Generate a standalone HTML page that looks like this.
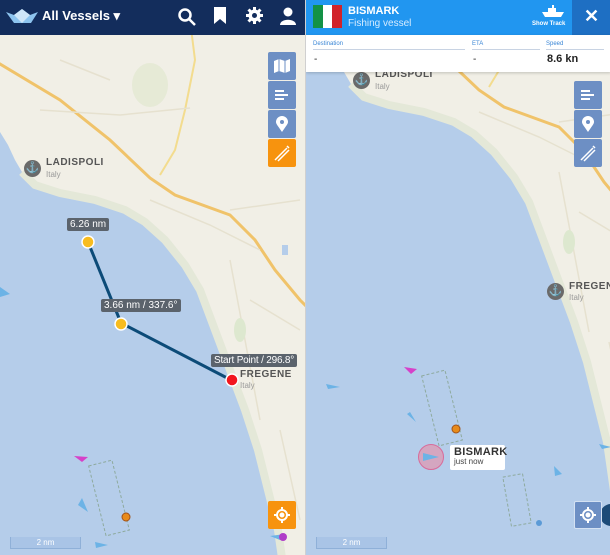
<!DOCTYPE html>
<html><head><meta charset="utf-8"><style>
*{margin:0;padding:0;box-sizing:border-box}
html,body{width:610px;height:555px;overflow:hidden}
body{font-family:"Liberation Sans",sans-serif;background:#f1efe6;position:relative}
.panel{position:absolute;top:0;height:555px;width:305px;overflow:hidden}
.btn{position:absolute;width:28px;height:28px;background:#6d8fc4;border-radius:2px;display:flex;align-items:center;justify-content:center}
.lbl{position:absolute;background:#5b636c;color:#fff;font-size:10px;padding:1px 3px;border-radius:2px;white-space:nowrap}
.tag{position:absolute;font-size:10px;color:#555;font-weight:bold;letter-spacing:.5px}
.sub{position:absolute;font-size:8px;color:#999}
.anch{position:absolute;width:17px;height:17px;border-radius:50%;background:#6a6a6a;color:#fff;font-size:11px;text-align:center;line-height:17px}
.scale{position:absolute;left:10px;top:537px;width:71px;height:12px;border:1px solid #8fb0d8;border-top:none;background:#a9c4e6;color:#fff;font-size:8px;text-align:center;line-height:12px}
</style></head><body>
<svg width="0" height="0" style="position:absolute;left:0;top:0"><defs>
<g id="map">
<rect x="-50" y="-120" width="420" height="820" fill="#f1efe6"/>
<path d="M-50,120 L0,132 L8,145 L15,160 L22,172 L35,185 L60,193 L95,200 L125,210 L145,222 L165,240 L185,265 L200,290 L215,330 L230,370 L245,410 L258,450 L268,490 L278,530 L288,600 L300,700 L-50,700 Z" fill="#b5cdea"/>
<path d="M22,172 L35,185 L60,193 L95,200 L125,210 L145,222 L165,240 L185,265 L200,290 L215,330 L230,370 L245,410 L258,450 L268,490 L278,530 L288,600 L300,700" fill="none" stroke="#e4e8d8" stroke-width="8"/>
<path d="M-10,58 L60,100 L110,140 L150,178 L175,195 L230,215 L255,240 L275,270 L300,300 L320,320" fill="none" stroke="#f0c36a" stroke-width="3"/>
<path d="M160,175 L175,150 L185,110 L195,60 L190,20" fill="none" stroke="#f3dc8e" stroke-width="2"/>
<path d="M40,110 L120,115 L190,108 M60,60 L110,80 M230,210 L300,200 M150,200 L210,225 L260,250 M250,300 L300,330 M230,260 L260,420 M280,430 L300,520" fill="none" stroke="#e6e1cf" stroke-width="1.5"/>
<ellipse cx="150" cy="85" rx="18" ry="22" fill="#e6ead6"/>
<ellipse cx="240" cy="330" rx="6" ry="12" fill="#dde8cf"/>
<rect x="282" y="245" width="6" height="10" fill="#b5cdea"/>
</g></defs></svg>

<!-- LEFT PANEL -->
<div class="panel" style="left:0">
<svg width="305" height="555" style="position:absolute;left:0;top:0">
<use href="#map"/>
<rect x="97" y="462" width="24" height="72" fill="none" stroke="#8eaa9e" stroke-dasharray="3,2" transform="rotate(-14 109 498)"/>
<line x1="88" y1="242" x2="121" y2="323" stroke="#0c4b78" stroke-width="3"/>
<line x1="121" y1="323" x2="231" y2="380" stroke="#0c4b78" stroke-width="3"/>
<circle cx="88" cy="242" r="6" fill="#f8bc1f" stroke="#fff" stroke-width="1.5"/>
<circle cx="121" cy="324" r="6" fill="#f8bc1f" stroke="#fff" stroke-width="1.5"/>
<circle cx="232" cy="380" r="6" fill="#f2161d" stroke="#fff" stroke-width="1.5"/>
<circle cx="126" cy="517" r="4" fill="#e88b1a" stroke="#a0521a" stroke-width="1"/>
<polygon points="74,456 88,457 82,462" fill="#d641c9"/>
<polygon points="0,287 10,294 0,297" fill="#6cb3e6"/>
<polygon points="78,505 88,512 82,498" fill="#6cb3e6"/>
<polygon points="95,542 108,545 96,548" fill="#6cb3e6"/>
<polygon points="270,536 285,534 280,540" fill="#6cb3e6"/>
<circle cx="283" cy="537" r="4" fill="#b03dc8"/>
</svg>
<div class="anch" style="left:24px;top:160px">⚓</div>
<div class="tag" style="left:46px;top:157px">LADISPOLI</div><div class="sub" style="left:46px;top:170px">Italy</div>
<div class="tag" style="left:240px;top:369px">FREGENE</div><div class="sub" style="left:240px;top:381px">Italy</div>
<div class="lbl" style="left:67px;top:218px">6.26 nm</div>
<div class="lbl" style="left:101px;top:299px">3.66 nm / 337.6°</div>
<div class="lbl" style="left:211px;top:354px;font-size:10px;letter-spacing:-0.2px">Start Point / 296.8°</div>
<div class="btn" style="left:268px;top:52px"><svg width="16" height="14"><path d="M0,2 L5,0 L11,2 L16,0 L16,12 L11,14 L5,12 L0,14Z" fill="#fff"/><path d="M5,0V12M11,2V14" stroke="#6d8fc4"/></svg></div>
<div class="btn" style="left:268px;top:81px"><svg width="16" height="14" fill="none" stroke="#fff" stroke-width="2"><path d="M1,3H10M1,7H14M1,11H10"/></svg></div>
<div class="btn" style="left:268px;top:110px"><svg width="12" height="16"><path d="M6,16 C2,10 0,8 0,6 A6,6 0 0 1 12,6 C12,8 10,10 6,16Z" fill="#fff"/><circle cx="6" cy="6" r="2" fill="#6d8fc4"/></svg></div>
<div class="btn" style="left:268px;top:139px;background:#f7930e"><svg width="18" height="18" fill="none" stroke="#fff" stroke-width="1.5"><path d="M2,16 L14,4 M5,17 L16,6 M14,2 L16,4"/></svg></div>
<div class="btn" style="left:268px;top:501px;background:#f7930e"><svg width="18" height="18" fill="none" stroke="#fff" stroke-width="2"><circle cx="9" cy="9" r="5"/><circle cx="9" cy="9" r="1.5" fill="#fff"/><path d="M9,1V4M9,14V17M1,9H4M14,9H17"/></svg></div>
<div class="scale">2 nm</div>
<div style="position:absolute;left:0;top:0;width:305px;height:35px;background:#132d5c">
<svg style="position:absolute;left:6px;top:9px" width="32" height="16"><path d="M0,3 L8,14 L25,14 L32,3 L24,6 L16,0 L8,6Z" fill="#8dc4ef"/><path d="M8,6 L16,0 L24,6 L16,14Z" fill="#cfe6f8"/></svg>
<div style="position:absolute;left:42px;top:8px;color:#fff;font-weight:bold;font-size:13px">All Vessels ▾</div>
<svg style="position:absolute;left:178px;top:8px" width="18" height="18" fill="none" stroke="#fff" stroke-width="2.5"><circle cx="7" cy="7" r="5.5"/><path d="M11,11L17,17"/></svg>
<svg style="position:absolute;left:214px;top:7px" width="12" height="18"><path d="M0,0H12V17L6,12L0,17Z" fill="#fff"/></svg>
<svg style="position:absolute;left:246px;top:7px" width="17" height="17"><circle cx="8.5" cy="8.5" r="6" fill="#fff"/><path d="M8.5,0V17M0,8.5H17M2.5,2.5L14.5,14.5M14.5,2.5L2.5,14.5" stroke="#fff" stroke-width="3"/><circle cx="8.5" cy="8.5" r="2.5" fill="#132d5c"/></svg>
<svg style="position:absolute;left:280px;top:7px" width="16" height="18"><circle cx="8" cy="5" r="4.5" fill="#fff"/><path d="M0,18 C0,11 16,11 16,18Z" fill="#fff"/></svg>
</div>
</div>

<!-- RIGHT PANEL -->
<div class="panel" style="left:305px;border-left:1px solid #d0d0d0">
<svg width="305" height="555" style="position:absolute;left:0;top:0">
<g transform="translate(23,-88)"><use href="#map"/></g>
<rect x="124" y="372" width="24" height="72" fill="none" stroke="#8eaa9e" stroke-dasharray="3,2" transform="rotate(-14 136 408)"/>
<rect x="201" y="475" width="20" height="50" fill="none" stroke="#8eaa9e" stroke-dasharray="3,2" transform="rotate(-10 211 500)"/>
<circle cx="150" cy="429" r="4" fill="#e88b1a" stroke="#a0521a"/>
<polygon points="98,367 111,369 105,374" fill="#d641c9"/>
<polygon points="20,384 34,387 22,389" fill="#6cb3e6"/>
<polygon points="101,414 110,422 104,412" fill="#6cb3e6"/>
<polygon points="248,466 256,474 249,476" fill="#6cb3e6"/>
<polygon points="293,444 305,447 296,449" fill="#6cb3e6"/>
<circle cx="233" cy="523" r="3" fill="#5b9ad6"/>
<circle cx="125" cy="457" r="12.5" fill="#d4a6c0" stroke="#d86b9a"/>
<polygon points="117,453 133,457 117,461" fill="#6cb3e6"/>
<circle cx="305" cy="515" r="11" fill="#1d4b78"/>
</svg>
<div class="anch" style="left:47px;top:72px">⚓</div>
<div class="tag" style="left:69px;top:69px">LADISPOLI</div><div class="sub" style="left:69px;top:82px">Italy</div>
<div class="anch" style="left:241px;top:283px">⚓</div>
<div class="tag" style="left:263px;top:281px">FREGENE</div><div class="sub" style="left:263px;top:293px">Italy</div>
<div style="position:absolute;left:144px;top:445px;width:55px;height:25px;background:#fff;border-radius:2px;padding:1px 4px">
<div style="font-size:11px;font-weight:bold;color:#333;letter-spacing:.3px">BISMARK</div><div style="font-size:8px;color:#444;margin-top:-1px">just now</div></div>
<div class="btn" style="left:268px;top:81px"><svg width="16" height="14" fill="none" stroke="#fff" stroke-width="2"><path d="M1,3H10M1,7H14M1,11H10"/></svg></div>
<div class="btn" style="left:268px;top:110px"><svg width="12" height="16"><path d="M6,16 C2,10 0,8 0,6 A6,6 0 0 1 12,6 C12,8 10,10 6,16Z" fill="#fff"/><circle cx="6" cy="6" r="2" fill="#6d8fc4"/></svg></div>
<div class="btn" style="left:268px;top:139px"><svg width="18" height="18" fill="none" stroke="#fff" stroke-width="1.5"><path d="M2,16 L14,4 M5,17 L16,6 M14,2 L16,4"/></svg></div>
<div class="btn" style="left:268px;top:501px;border:1px solid #d4e1f2"><svg width="18" height="18" fill="none" stroke="#fff" stroke-width="2"><circle cx="9" cy="9" r="5"/><circle cx="9" cy="9" r="1.5" fill="#fff"/><path d="M9,1V4M9,14V17M1,9H4M14,9H17"/></svg></div>
<div class="scale">2 nm</div>
<div style="position:absolute;left:0;top:0;width:305px;height:35px;background:#2196f0">
<div style="position:absolute;left:7px;top:5px;width:29px;height:23px;display:flex"><div style="flex:1;background:#139246"></div><div style="flex:1;background:#fff"></div><div style="flex:1;background:#d1232a"></div></div>
<div style="position:absolute;left:42px;top:5px;color:#fff;font-weight:bold;font-size:11px">BISMARK</div>
<div style="position:absolute;left:42px;top:18px;color:#d6ecff;font-size:10px">Fishing vessel</div>
<svg style="position:absolute;left:236px;top:5px" width="22" height="12"><path d="M0,7H22L19,12H3Z M6,3H14V7H6Z M10,0H12V3H10Z" fill="#fff"/></svg>
<div style="position:absolute;left:226px;top:21px;color:#fff;font-weight:bold;font-size:6px">Show Track</div>
<div style="position:absolute;left:266px;top:0;width:39px;height:35px;background:#1e6fc3;color:#fff;font-size:18px;font-weight:bold;text-align:center;line-height:33px">✕</div>
</div>
<div style="position:absolute;left:0;top:35px;width:305px;height:37px;background:#fff;box-shadow:0 1px 3px rgba(0,0,0,.2)">
<div style="position:absolute;left:7px;top:6px;width:152px;border-bottom:1px solid #c8d3e3;font-size:6px;color:#3a86d6;padding-bottom:2px">Destination</div>
<div style="position:absolute;left:166px;top:6px;width:68px;border-bottom:1px solid #c8d3e3;font-size:6px;color:#3a86d6;padding-bottom:2px">ETA</div>
<div style="position:absolute;left:240px;top:6px;width:58px;border-bottom:1px solid #c8d3e3;font-size:6px;color:#3a86d6;padding-bottom:2px">Speed</div>
<div style="position:absolute;left:8px;top:19px;font-size:10px;color:#222">-</div>
<div style="position:absolute;left:167px;top:19px;font-size:10px;color:#222">-</div>
<div style="position:absolute;left:241px;top:18px;font-size:11px;color:#222;font-weight:bold">8.6 kn</div>
</div>
</div>
</body></html>
